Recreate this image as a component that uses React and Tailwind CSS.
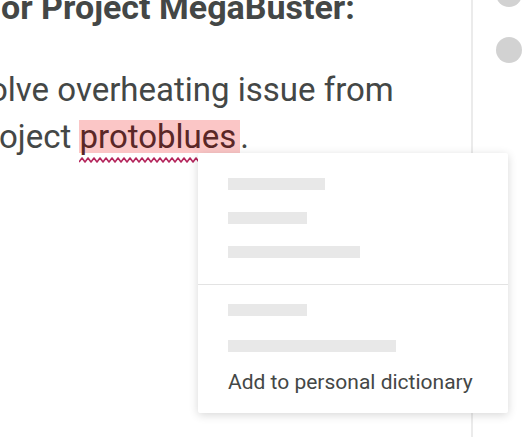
import React from 'react';

const Bar = ({ w }) => <div className={`h-[12px] bg-[#e8e8e8] ${w}`} />;

const Squiggle = () => {
  // zigzag under the misspelled word
  let d = 'M0 5';
  for (let x = 0; x < 170; x += 6) {
    d += ` L${x + 3} 1 L${x + 6} 5`;
  }
  return (
    <svg className="absolute left-0 top-[37px]" width="170" height="7" viewBox="0 0 170 7">
      <path d={d} fill="none" stroke="#b4265c" strokeWidth="1.6" strokeLinejoin="round" />
    </svg>
  );
};

export default function App() {
  return (
    <div className="relative w-[528px] h-[437px] overflow-hidden bg-white" style={{ fontFamily: 'Roboto, "Noto Sans", sans-serif' }}>
      <div className="flex h-full">
        {/* document */}
        <div className="w-[471px] overflow-hidden text-[#444746]">
          <div className="-mt-[10px] ml-[1px] whitespace-nowrap text-[34px] leading-[34px] font-bold">
            or Project MegaBuster:
          </div>
          <div className="mt-[42px] whitespace-nowrap text-[33px] leading-[47px]">
            <div className="-ml-[11px]">olve overheating issue from</div>
            <div className="-ml-[1px]">
              oject{' '}
              <span className="relative inline-block h-[33px] leading-[33px] pr-[4px] bg-[#fbc6c6] text-[#5a2727]">
                protoblues
                <Squiggle />
              </span>
              .
            </div>
          </div>
        </div>
        <div className="w-[2px] h-full bg-[#ebebeb]" />
        {/* side rail */}
        <div className="flex-1 flex flex-col gap-[30px] pl-[23px] -mt-[19px]">
          <div className="w-[26px] h-[26px] rounded-full bg-[#d2d2d2]" />
          <div className="w-[26px] h-[26px] rounded-full bg-[#d2d2d2]" />
        </div>
      </div>

      {/* spelling menu */}
      <div className="absolute left-[198px] top-[153px] w-[310px] h-[260px] bg-white rounded-[2px] shadow-[0_2px_10px_rgba(0,0,0,0.16)] flex flex-col">
        <div className="flex flex-col gap-[22px] pl-[30px] pt-[25px] pb-[26px]">
          <Bar w="w-[97px]" />
          <Bar w="w-[79px]" />
          <Bar w="w-[132px]" />
        </div>
        <div className="h-[1px] bg-[#e3e3e3]" />
        <div className="flex flex-col pl-[30px] pt-[19px]">
          <Bar w="w-[79px]" />
          <div className="mt-[24px]"><Bar w="w-[168px]" /></div>
          <div className="mt-[17px] text-[21px] leading-[26px] text-[#444746] whitespace-nowrap">
            Add to personal dictionary
          </div>
        </div>
      </div>
    </div>
  );
}
